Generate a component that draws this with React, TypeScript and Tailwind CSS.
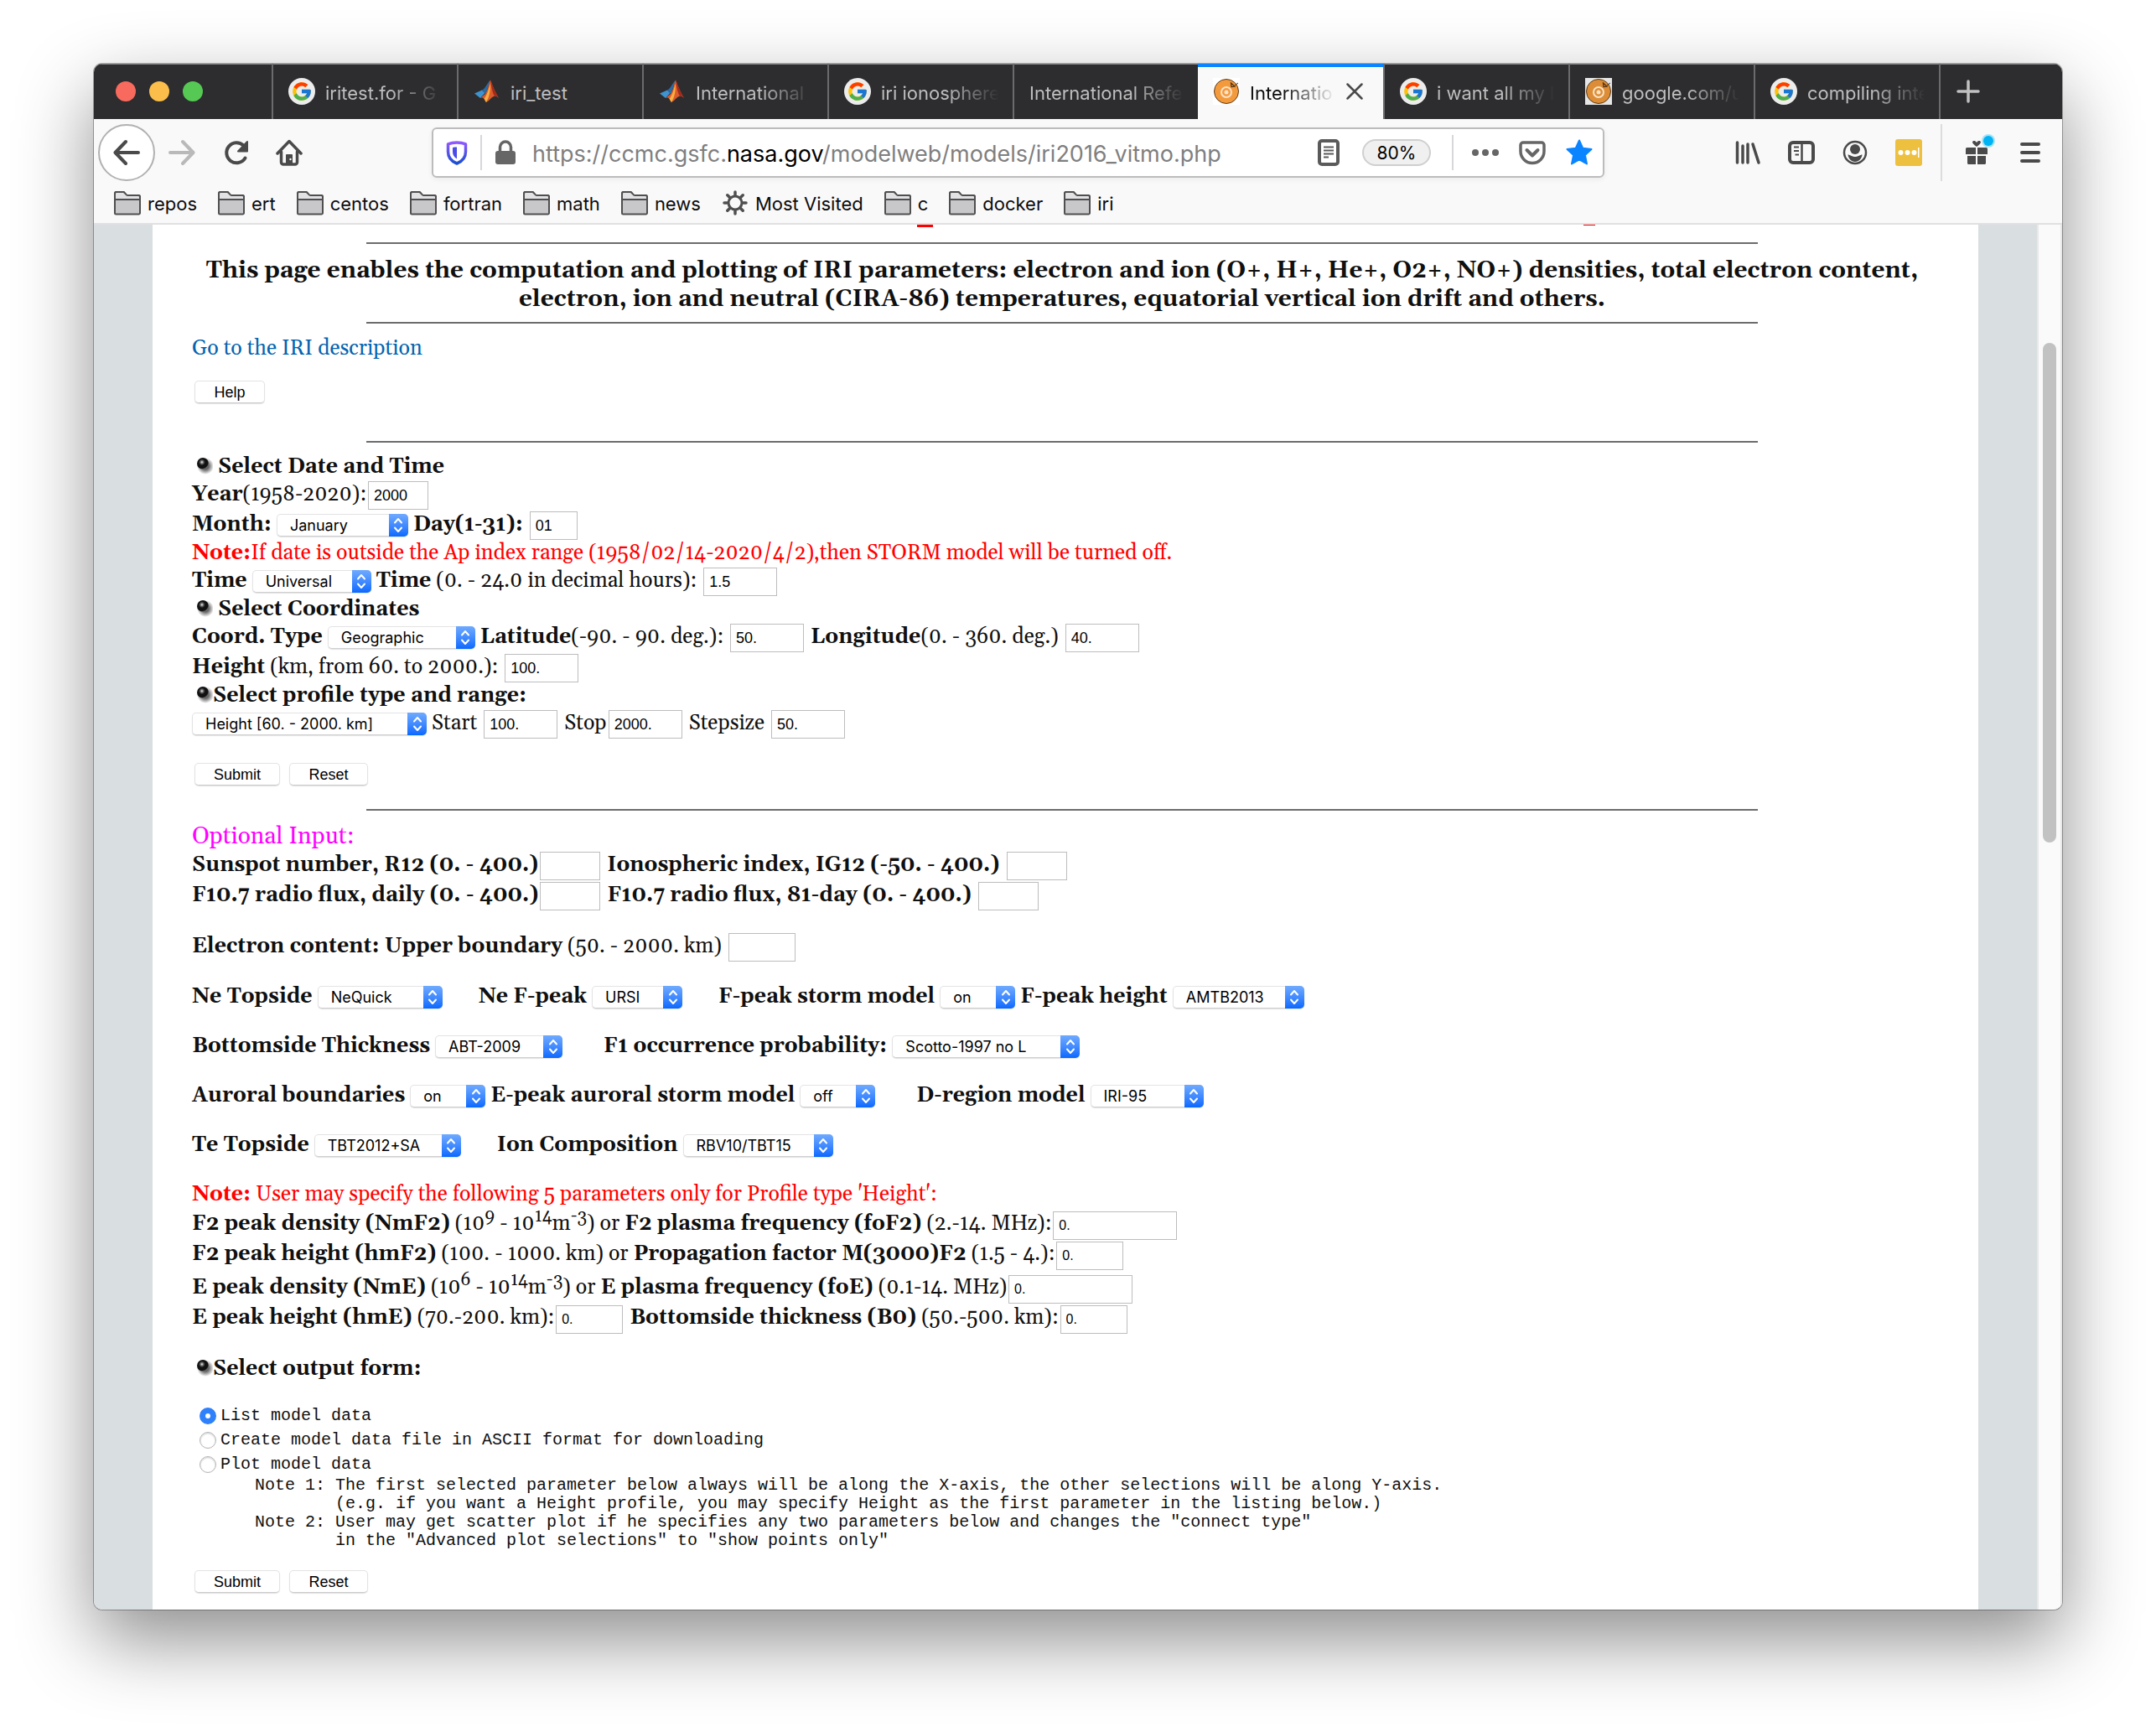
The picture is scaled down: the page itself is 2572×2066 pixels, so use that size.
import React, { useId } from "react";
import { FcGoogle } from "react-icons/fc";

function GoogleIcon() {
  return (
    <span className="flex size-8 shrink-0 items-center justify-center rounded-full bg-[#ececec]">
      <FcGoogle className="size-[26px]" aria-hidden="true" />
    </span>
  );
}

function MatlabIcon() {
  return (
    <svg className="size-8 shrink-0" viewBox="0 0 32 32" aria-hidden="true">
      <path d="M1 18.500l9-4 3.500 3.500L8 24z" fill="#3f93cf" />
      <path d="M10 14.500C14 13 16 6 20 2.500L14.500 19l-1-1z" fill="#2b6aa3" />
      <path d="M8 24l6-5c3-4 4-12 6-16.500 2 5 6 15 10 21.500-2-2-4-3-6-2-3 1-5.500 5.500-9 7-1-1-2-4-3.500-5-1-.6-2-.6-3.500 0z" fill="#dd5a2a" />
      <path d="M20 2.500c2 5 6 15 10 21.500-2-2-4-3-5-2.500C22 17 21 9 20 2.500z" fill="#a32a1c" />
      <path d="M15 29c-1-1-1.500-3-2.500-4.200C16 21 18.500 12 19.500 7c1 5 0 15-4.500 22z" fill="#f6b043" />
    </svg>
  );
}

function OrangeIcon({ dim }: { dim?: boolean }) {
  return (
    <svg className="size-8 shrink-0" viewBox="0 0 32 32" aria-hidden="true">
      <rect width="32" height="32" fill={dim ? "#e6e6e6" : "#ffffff"} />
      <circle cx="16" cy="16" r="14.500" fill={dim ? "#dd8d35" : "#f39a3c"} stroke="#5a3b1c" strokeWidth="1" />
      <circle cx="16" cy="17" r="6" fill="none" stroke="#fbe3c8" strokeWidth="2" />
      <circle cx="16" cy="17" r="2.500" fill="#fbe3c8" />
      <path d="M21.500 6l4.500 4-4 .5z" fill="none" stroke="#4b3118" strokeWidth="1.200" />
      <path d="M26 9l4-3" stroke="#4b3118" strokeWidth="1" />
    </svg>
  );
}

type TabData = { title: string; icon?: "google" | "matlab" | "orange"; active?: boolean };

const tabs: TabData[] = [
  { title: "iritest.for - G", icon: "google" },
  { title: "iri_test", icon: "matlab" },
  { title: "International", icon: "matlab" },
  { title: "iri ionosphere", icon: "google" },
  { title: "International Refe" },
  { title: "Internatio", icon: "orange", active: true },
  { title: "i want all my l", icon: "google" },
  { title: "google.com/u", icon: "orange" },
  { title: "compiling inte", icon: "google" },
];

function Tab({ title, icon, active }: TabData) {
  return (
    <div
      role="tab"
      aria-selected={!!active}
      className={
        "flex w-[221px] min-w-0 items-center gap-3 pl-[18px] text-[22px] " +
        (active
          ? "border-t-4 border-[#0a84ff] bg-[#f9f9fa] pr-6 pb-1 text-[#0c0c0d]"
          : "border-l-2 border-[#6b6b6d] pr-4 text-[#bebebf]")
      }
    >
      {icon === "google" && <GoogleIcon />}
      {icon === "matlab" && <MatlabIcon />}
      {icon === "orange" && <OrangeIcon dim={!active} />}
      <span
        className={
          "min-w-0 flex-1 whitespace-nowrap pt-1 " +
          (title === "iri_test" ? "" : "[mask-image:linear-gradient(to_right,black_calc(100%-64px),transparent)]")
        }
      >
        {title}
      </span>
      {active && (
        <button type="button" aria-label="Close tab" className="shrink-0">
          <svg className="size-5" viewBox="0 0 20 20" fill="none" stroke="#4a4a4b" strokeWidth="2.500" strokeLinecap="round">
            <path d="M1.500 1.500l17 17M18.500 1.500l-17 17" />
          </svg>
        </button>
      )}
    </div>
  );
}

function TabBar() {
  return (
    <div className="flex h-[66px] bg-[#2d2d2f] shadow-[inset_0_1px_0_#8a8a8c]">
      <div className="flex w-[212px] shrink-0 items-center gap-4 pl-[26px]">
        <span className="size-6 rounded-full bg-[#f96a5e]" />
        <span className="size-6 rounded-full bg-[#fbbe4b]" />
        <span className="size-6 rounded-full bg-[#56c954]" />
      </div>
      <div role="tablist" className="flex min-w-0">
        {tabs.map((t, i) => (
          <Tab key={i} {...t} />
        ))}
      </div>
      <button type="button" aria-label="New tab" className="flex items-center border-l-2 border-[#6b6b6d] px-[19px]">
        <svg className="size-7" viewBox="0 0 28 28" stroke="#c0c0c1" strokeWidth="3.500" strokeLinecap="round">
          <path d="M14 2v24M2 14h24" />
        </svg>
      </button>
    </div>
  );
}

function ToolButton({ label, children }: { label: string; children: React.ReactNode }) {
  return (
    <button type="button" aria-label={label} className="flex size-8 shrink-0 items-center justify-center">
      {children}
    </button>
  );
}

function NavBar() {
  return (
    <div className="flex h-20 items-center pl-[5px] pr-[22px]">
      <button type="button" aria-label="Back" className="flex size-[68px] items-center justify-center rounded-full border-2 border-[#b1b1b1] bg-white">
        <svg className="size-8" viewBox="0 0 32 32" fill="none" stroke="#4a4a4b" strokeWidth="4" strokeLinecap="round" strokeLinejoin="round">
          <path d="M30 16H3M15 3L2.500 16 15 29" />
        </svg>
      </button>
      <div className="ml-4 flex gap-8">
        <ToolButton label="Forward">
          <svg className="size-8" viewBox="0 0 32 32" fill="none" stroke="#b9b9ba" strokeWidth="4" strokeLinecap="round" strokeLinejoin="round">
            <path d="M2 16h27M17 3l12.500 13L17 29" />
          </svg>
        </ToolButton>
        <ToolButton label="Reload">
          <svg className="size-8" viewBox="0 0 32 32" fill="none" stroke="#4a4a4b" strokeWidth="4" strokeLinecap="round">
            <path d="M27.500 22.500a12 12 0 1 1-2-15" />
            <path d="M30 3v11.500H19z" fill="#4a4a4b" strokeWidth="2" strokeLinejoin="round" />
          </svg>
        </ToolButton>
        <ToolButton label="Home">
          <svg className="size-8" viewBox="0 0 32 32" fill="none" stroke="#4a4a4b" strokeWidth="3.500" strokeLinecap="round" strokeLinejoin="round">
            <path d="M2 17L16 2.500 30 17M6.500 15v12.500a2.500 2.500 0 0 0 2.500 2.500h14a2.500 2.500 0 0 0 2.500-2.500V15" />
            <path d="M12.500 29V18.500h7V29z" fill="#4a4a4b" strokeWidth="1" />
            <circle cx="17.500" cy="24" r="1.200" fill="#fff" stroke="none" />
          </svg>
        </ToolButton>
      </div>

      <div className="ml-[154px] flex h-[60px] min-w-0 max-w-[1399px] flex-1 items-center rounded-md border-2 border-[#bcbcbc] bg-white px-3 shadow-[0_2px_6px_rgba(0,0,0,0.06)]">
        <svg className="size-8 shrink-0" viewBox="0 0 32 32" aria-hidden="true">
          <defs>
            <linearGradient id="shieldFill" x1="0" y1="0" x2="0" y2="1">
              <stop offset="0" stopColor="#9059ff" />
              <stop offset="1" stopColor="#1c4fd0" />
            </linearGradient>
          </defs>
          <path d="M16 4c4 0 8 .8 10.500 1.800V15c0 7-4 11.500-10.500 14-6.500-2.500-10.500-7-10.500-14V5.800C8 4.800 12 4 16 4z" fill="none" stroke="url(#shieldFill)" strokeWidth="3.500" strokeLinejoin="round" />
          <path d="M16 9.500v14c-3.500-2-5-5-5-8.500v-5c1.500-.4 3.500-.5 5-.5z" fill="#4a4be8" />
        </svg>
        <span className="ml-[12px] h-[42px] w-0.5 shrink-0 bg-[#d7d7db]" />
        <svg className="ml-[12px] size-8 shrink-0" viewBox="0 0 32 32" aria-hidden="true">
          <path d="M9.500 15V9.500a6.500 6.500 0 0 1 13 0V15" fill="none" stroke="#666" strokeWidth="3.500" />
          <rect x="4" y="14" width="24" height="16" rx="3" fill="#666" />
        </svg>
        <div className="ml-4 min-w-0 flex-1 overflow-hidden whitespace-nowrap pt-1 text-[27px] text-[#7f7f80]">
          https://ccmc.gsfc.<span className="text-black">nasa.gov</span>/modelweb/models/iri2016_vitmo.php
        </div>
        <svg className="size-8 shrink-0" viewBox="0 0 32 32" fill="none" stroke="#5a5a5b" aria-hidden="true">
          <rect x="5" y="2" width="22" height="28" rx="3" strokeWidth="4" />
          <path d="M10 9.500h12M10 13.500h12M10 17.500h12M10 21.500h6" strokeWidth="2" />
        </svg>
        <span className="ml-6 flex h-8 w-[82px] shrink-0 items-center justify-center rounded-full border-2 border-[#cfcfd0] bg-[#f0f0f1] pt-0.5 text-[21px] text-black">
          80%
        </span>
        <span className="ml-[25px] h-[42px] w-0.5 shrink-0 bg-[#d7d7db]" />
        <div className="ml-[22px] flex shrink-0 gap-6">
          <ToolButton label="Page actions">
            <svg className="size-8" viewBox="0 0 32 32" fill="#666">
              <circle cx="4" cy="16" r="4" />
              <circle cx="16" cy="16" r="4" />
              <circle cx="28" cy="16" r="4" />
            </svg>
          </ToolButton>
          <ToolButton label="Save to Pocket">
            <svg className="size-8" viewBox="0 0 32 32" fill="none" stroke="#666" strokeWidth="4" strokeLinecap="round" strokeLinejoin="round">
              <path d="M5 4h22a3 3 0 0 1 3 3v7.500a14 14 0 0 1-28 0V7a3 3 0 0 1 3-3z" strokeWidth="3.500" />
              <path d="M9.500 13l6.500 6.500 6.500-6.500" />
            </svg>
          </ToolButton>
          <ToolButton label="Edit bookmark">
            <svg className="size-8" viewBox="0 0 32 32" fill="#0a84ff" stroke="#0a84ff" strokeWidth="2" strokeLinejoin="round">
              <path d="M16 1.500l4.300 9.300 10.200 1.200-7.600 6.900 2.100 10.600L16 24.500l-9 5 2.100-10.600L1.500 12l10.200-1.200z" />
            </svg>
          </ToolButton>
        </div>
      </div>

      <div className="ml-auto flex items-center">
        <div className="flex gap-8">
          <ToolButton label="Library">
            <svg className="size-8" viewBox="0 0 32 32" fill="none" stroke="#4a4a4b" strokeWidth="3.500" strokeLinecap="round">
              <path d="M3.500 4v24M10 8v20M16 6v22M22 6l7 22" />
            </svg>
          </ToolButton>
          <ToolButton label="Sidebars">
            <svg className="size-8" viewBox="0 0 32 32" fill="none" stroke="#4a4a4b">
              <rect x="2" y="4" width="28" height="24" rx="4" strokeWidth="4" />
              <path d="M16.500 5v22" strokeWidth="2.500" />
              <path d="M7 9.500h6M7 14h6M8.500 18.500H13" strokeWidth="2" />
            </svg>
          </ToolButton>
          <ToolButton label="Account">
            <svg className="size-8" viewBox="0 0 32 32">
              <circle cx="16" cy="16" r="13" fill="none" stroke="#4a4a4b" strokeWidth="2.500" />
              <circle cx="16" cy="12" r="6" fill="#4a4a4b" />
              <path d="M7.500 18.500c2.500 0 4.500 2.500 8.500 2.500s6-2.500 8.500-2.500c-.5 4.500-4 8.500-8.500 8.500s-8-4-8.500-8.500z" fill="#4a4a4b" />
            </svg>
          </ToolButton>
          <ToolButton label="Password manager">
            <svg className="size-8" viewBox="0 0 32 32">
              <rect width="32" height="32" rx="3" fill="#edc03f" />
              <g fill="#fff">
                <circle cx="6.500" cy="16" r="3" />
                <circle cx="14.500" cy="16" r="3" />
                <circle cx="22.500" cy="16" r="3" />
                <rect x="27" y="10" width="1.500" height="12" />
              </g>
            </svg>
          </ToolButton>
        </div>
        <span className="ml-[22px] h-[68px] w-0.5 bg-[#dcdcdd]" />
        <div className="ml-[25px] flex gap-8">
          <span className="relative flex">
            <ToolButton label="What's new">
              <svg className="size-8" viewBox="0 0 32 32" fill="#4a4a4b">
                <path d="M3 11.500A1.500 1.500 0 0 1 4.500 10H15v8H3zM17 10h10.500a1.500 1.500 0 0 1 1.500 1.500V18H17zM5 20h10v10H6.500A1.500 1.500 0 0 1 5 28.500zM17 20h10v8.500a1.500 1.500 0 0 1-1.500 1.500H17z" />
                <path d="M16 9c-3-2-5-4-5-5.500C11 1.500 14.500 1 16 4c1.500-3 5-2.500 5-.5C21 5 19 7 16 9z" />
              </svg>
            </ToolButton>
            <span className="absolute -right-1 -top-1 size-3 rounded-full bg-[#00b3f4] shadow-[0_0_0_2px_#a6e3f8]" />
          </span>
          <ToolButton label="Menu">
            <svg className="size-8" viewBox="0 0 32 32" stroke="#4a4a4b" strokeWidth="4" strokeLinecap="round">
              <path d="M6 6h20M6 16h20M6 26h20" />
            </svg>
          </ToolButton>
        </div>
      </div>
    </div>
  );
}

function FolderIcon() {
  return (
    <svg className="size-8" viewBox="0 0 32 32" stroke="#4f4f50" strokeWidth="2" strokeLinejoin="round" aria-hidden="true">
      <path d="M1 27V4a2 2 0 0 1 2-2h8c2 0 3 4 5 4h13a2 2 0 0 1 2 2v19a1.500 1.500 0 0 1-1.500 1.500h-27A1.500 1.500 0 0 1 1 27z" fill="#c8c8cb" />
      <path d="M1 11V4a2 2 0 0 1 2-2h8c2 0 3 4 5 4h13a2 2 0 0 1 2 2v3z" fill="#e2e2e4" />
    </svg>
  );
}

function GearIcon() {
  return (
    <svg className="size-8" viewBox="0 0 32 32" fill="none" stroke="#4f4f50" aria-hidden="true">
      <circle cx="16" cy="15" r="8" strokeWidth="3" />
      <path
        d="M16 2v4M16 24v4M3 15h4M25 15h4M6.800 5.800l3 3M22.200 21.200l3 3M6.800 24.200l3-3M22.200 8.800l3-3"
        strokeWidth="3.500"
        strokeLinecap="round"
      />
    </svg>
  );
}

const bookmarks = ["repos", "ert", "centos", "fortran", "math", "news", "Most Visited", "c", "docker", "iri"];

function BookmarkBar() {
  return (
    <div className="flex h-[46px] items-center gap-[25px] border-b-2 border-[#e0e0e1] pb-0.5 pl-6 text-[22px] text-[#0c0c0d]">
      {bookmarks.map((b) => (
        <a key={b} href="#" className="flex items-center gap-2 whitespace-nowrap">
          {b === "Most Visited" ? <GearIcon /> : <FolderIcon />}
          {b}
        </a>
      ))}
    </div>
  );
}

function Row({ children, className = "" }: { children: React.ReactNode; className?: string }) {
  return <div className={"leading-[31px] " + className}>{children}</div>;
}

function Field({
  label,
  value = "",
  width,
  tight,
  small,
}: {
  label: React.ReactNode;
  value?: string;
  width: string;
  tight?: boolean;
  small?: boolean;
}) {
  const id = useId();
  return (
    <>
      <label htmlFor={id}>{label}</label>
      {tight ? "" : " "}
      <input
        id={id}
        type="text"
        defaultValue={value}
        className={
          "mx-0.5 my-px inline-block h-[34px] border border-[#bdbdbd] bg-white px-1.5 font-['Liberation_Sans',Arial,sans-serif] leading-8 text-black " +
          (small ? "text-[16px] " : "text-[18px] ") +
          width
        }
      />
    </>
  );
}

function Choice({ label, value, width }: { label: React.ReactNode; value: string; width: string }) {
  const id = useId();
  return (
    <>
      {label !== null && (
        <>
          <label htmlFor={id}>{label}</label>{" "}
        </>
      )}
      <span className={"relative inline-block h-[27px] leading-[27px] " + width}>
        <select
          id={id}
          aria-label={label === null ? "Profile type" : undefined}
          className="h-[27px] w-full appearance-none rounded-[5px] border border-[#e3e3e3] border-b-[#cfcfcf] bg-white pl-[15px] font-[Inter,sans-serif] text-[18px] leading-[25px] text-black shadow-[0_1px_1px_rgba(0,0,0,0.12)]"
        >
          <option>{value}</option>
        </select>
        <span className="pointer-events-none absolute inset-y-0 right-0 flex w-[23px] items-center justify-center rounded-r-[5px] bg-gradient-to-b from-[#6faaff] to-[#0568ff]">
          <svg className="h-[19px] w-3" viewBox="0 0 12 19" fill="none" stroke="#fff" strokeWidth="2" strokeLinecap="round" strokeLinejoin="round" aria-hidden="true">
            <path d="M2 6.500L6 2l4 4.500M2 12.500L6 17l4-4.500" />
          </svg>
        </span>
      </span>
    </>
  );
}

function Bullet() {
  return (
    <svg className="-mb-0.5 inline-block h-[22px] w-[25px] align-baseline" viewBox="0 0 25 22" aria-hidden="true">
      <defs>
        <radialGradient id="ballShade" cx="0.5" cy="0.5" r="0.5">
          <stop offset="0.4" stopColor="#000" stopOpacity="0.6" />
          <stop offset="1" stopColor="#000" stopOpacity="0" />
        </radialGradient>
        <radialGradient id="ballFill" cx="0.42" cy="0.38" r="0.6">
          <stop offset="0" stopColor="#f2f2f2" />
          <stop offset="0.2" stopColor="#777" />
          <stop offset="0.45" stopColor="#111" />
          <stop offset="0.85" stopColor="#111" />
          <stop offset="1" stopColor="#666" />
        </radialGradient>
      </defs>
      <ellipse cx="16" cy="12" rx="10" ry="10" fill="url(#ballShade)" />
      <circle cx="13" cy="9" r="7" fill="url(#ballFill)" />
    </svg>
  );
}

function Divider({ className = "" }: { className?: string }) {
  return <hr className={"mx-auto w-4/5 border-t-2 border-[#6c6c6c] " + className} />;
}

function PushButton({ children, width, type = "button" }: { children: React.ReactNode; width: string; type?: "button" | "submit" | "reset" }) {
  return (
    <button
      type={type}
      className={
        "h-[27px] rounded-[5px] border border-[#e3e3e3] border-b-[#cbcbcb] bg-white font-['Liberation_Sans',Arial,sans-serif] text-[18px] leading-[22px] text-black shadow-[0_1px_1px_rgba(0,0,0,0.12)] " +
        width
      }
    >
      {children}
    </button>
  );
}

function SubmitRow({ className }: { className: string }) {
  return (
    <div className={"flex gap-[11px] pl-[3px] " + className}>
      <PushButton type="submit" width="w-[102px]">Submit</PushButton>
      <PushButton type="reset" width="w-[94px]">Reset</PushButton>
    </div>
  );
}

function RadioRow({ children, checked }: { children: React.ReactNode; checked?: boolean }) {
  return (
    <label className="flex h-[29px] items-center gap-[5px] pl-[9px]">
      <input
        type="radio"
        name="output"
        defaultChecked={checked}
        className="size-5 appearance-none rounded-full border border-[#b5b5b5] bg-white shadow-[inset_0_1px_2px_rgba(0,0,0,0.2)] checked:border-[7px] checked:border-[#2f80fb] checked:shadow-none"
      />
      <span className="whitespace-pre">{children}</span>
    </label>
  );
}

const plotNotes = [
  ["Note 1:", "The first selected parameter below always will be along the X-axis, the other selections will be along Y-axis."],
  ["", "(e.g. if you want a Height profile, you may specify Height as the first parameter in the listing below.)"],
  ["Note 2:", "User may get scatter plot if he specifies any two parameters below and changes the \"connect type\""],
  ["", "in the \"Advanced plot selections\" to \"show points only\""],
];

function ModelForm() {
  return (
    <form onSubmit={(e) => e.preventDefault()}>
      <Row className="mt-3.5"><Bullet /> <b>Select Date and Time</b></Row>
      <Row><Field tight label={<><b>Year</b>(1958-2020):</>} value="2000" width="w-[72px]" /></Row>
      <Row>
        <Choice label={<b>Month:</b>} value="January" width="w-[157px]" />{" "}
        <Field label={<b>Day(1-31):</b>} value="01" width="w-[57px]" />
      </Row>
      <Row className="text-[#ff0000]">
        <b>Note:</b>If date is outside the Ap index range (1958/02/14-2020/4/2),then STORM model will be turned off.
      </Row>
      <Row>
        <Choice label={<b>Time</b>} value="Universal" width="w-[142px]" />{" "}
        <Field label={<><b>Time</b> (0. - 24.0 in decimal hours):</>} value="1.5" width="w-[88px]" />
      </Row>
      <Row><Bullet /> <b>Select Coordinates</b></Row>
      <Row>
        <Choice label={<b>Coord. Type</b>} value="Geographic" width="w-[176px]" />{" "}
        <Field label={<><b>Latitude</b>(-90. - 90. deg.):</>} value="50." width="w-[88px]" />{" "}
        <Field label={<><b>Longitude</b>(0. - 360. deg.)</>} value="40." width="w-[88px]" />
      </Row>
      <Row><Field label={<><b>Height</b> (km, from 60. to 2000.):</>} value="100." width="w-[88px]" /></Row>
      <Row><Bullet /><b>Select profile type and range:</b></Row>
      <Row>
        <Choice label={null} value="Height [60. - 2000. km]" width="w-[280px]" />{" "}
        <Field label="Start" value="100." width="w-[88px]" />{" "}
        <Field tight label="Stop" value="2000." width="w-[88px]" />{" "}
        <Field label="Stepsize" value="50." width="w-[88px]" />
      </Row>
      <SubmitRow className="mt-7" />

      <Divider className="mt-7" />
      <h2 className="mt-3.5 text-[28px] leading-[34px] text-[#ff00ff]">Optional Input:</h2>
      <Row>
        <Field tight label={<b>Sunspot number, R12 (0. - 400.)</b>} width="w-[72px]" />{" "}
        <Field label={<b>Ionospheric index, IG12 (-50. - 400.)</b>} width="w-[72px]" />
      </Row>
      <Row>
        <Field tight label={<b>F10.7 radio flux, daily (0. - 400.)</b>} width="w-[72px]" />{" "}
        <Field label={<b>F10.7 radio flux, 81-day (0. - 400.)</b>} width="w-[72px]" />
      </Row>
      <Row className="mt-[25px]">
        <Field label={<><b>Electron content: Upper boundary</b> (50. - 2000. km)</>} width="w-[80px]" />
      </Row>
      <Row className="mt-[26px]">
        <Choice label={<b>Ne Topside</b>} value="NeQuick" width="w-[149px]" />{" "}
        <span className="ml-[37px]"><Choice label={<b>Ne F-peak</b>} value="URSI" width="w-[108px]" /></span>{" "}
        <span className="ml-[37px]"><Choice label={<b>F-peak storm model</b>} value="on" width="w-[90px]" /></span>{" "}
        <Choice label={<b>F-peak height</b>} value="AMTB2013" width="w-[157px]" />
      </Row>
      <Row className="mt-7">
        <Choice label={<b>Bottomside Thickness</b>} value="ABT-2009" width="w-[152px]" />{" "}
        <span className="ml-[43px]"><Choice label={<b>F1 occurrence probability:</b>} value="Scotto-1997 no L" width="w-[224px]" /></span>
      </Row>
      <Row className="mt-7">
        <Choice label={<b>Auroral boundaries</b>} value="on" width="w-[90px]" />{" "}
        <Choice label={<b>E-peak auroral storm model</b>} value="off" width="w-[90px]" />{" "}
        <span className="ml-[43px]"><Choice label={<b>D-region model</b>} value="IRI-95" width="w-[135px]" /></span>
      </Row>
      <Row className="mt-7">
        <Choice label={<b>Te Topside</b>} value="TBT2012+SA" width="w-[175px]" />{" "}
        <span className="ml-[37px]"><Choice label={<b>Ion Composition</b>} value="RBV10/TBT15" width="w-[179px]" /></span>
      </Row>
      <Row className="mt-7 text-[#ff0000]">
        <b>Note:</b> User may specify the following 5 parameters only for Profile type 'Height':
      </Row>
      <Row className="mt-[3px]">
        <Field
          tight
          small
          label={<><b>F2 peak density (NmF2)</b> (10<sup>9</sup> - 10<sup>14</sup>m<sup>-3</sup>) or <b>F2 plasma frequency (foF2)</b> (2.-14. MHz):</>}
          value="0."
          width="w-[148px]"
        />
      </Row>
      <Row>
        <Field
          tight
          small
          label={<><b>F2 peak height (hmF2)</b> (100. - 1000. km) or <b>Propagation factor M(3000)F2</b> (1.5 - 4.):</>}
          value="0."
          width="w-[80px]"
        />
      </Row>
      <Row className="mt-1">
        <Field
          tight
          small
          label={<><b>E peak density (NmE)</b> (10<sup>6</sup> - 10<sup>14</sup>m<sup>-3</sup>) or <b>E plasma frequency (foE)</b> (0.1-14. MHz)</>}
          value="0."
          width="w-[148px]"
        />
      </Row>
      <Row>
        <Field tight small label={<><b>E peak height (hmE)</b> (70.-200. km):</>} value="0." width="w-[80px]" />{" "}
        <Field tight small label={<><b>Bottomside thickness (B0)</b> (50.-500. km):</>} value="0." width="w-[80px]" />
      </Row>
      <Row className="mt-[26px]"><Bullet /><b>Select output form:</b></Row>

      <div className="mt-[25px] font-['Liberation_Mono','Courier_New',monospace] text-[20px] leading-[22px]">
        <RadioRow checked>List model data</RadioRow>
        <RadioRow>Create model data file in ASCII format for downloading</RadioRow>
        <RadioRow>Plot model data</RadioRow>
        <dl className="grid grid-cols-[auto_1fr] gap-x-3 pl-[75px]">
          {plotNotes.map(([term, text]) => (
            <React.Fragment key={text}>
              <dt>{term}</dt>
              <dd>{text}</dd>
            </React.Fragment>
          ))}
        </dl>
      </div>
      <SubmitRow className="mt-6" />
    </form>
  );
}

export default function App() {
  return (
    <div className="min-h-screen bg-white px-28 pb-[148px] pt-[76px] font-[Inter,sans-serif]">
      <div className="overflow-hidden rounded-[10px] bg-[#f9f9fa] shadow-[0_0_0_1px_rgba(0,0,0,0.3),0_36px_90px_rgba(0,0,0,0.45)]">
        <TabBar />
        <NavBar />
        <BookmarkBar />
        <div className="flex">
          <div className="min-w-0 flex-1 bg-[#d9dee1] px-[70px]">
            <main className="bg-white pb-5 pl-[47px] pr-[55px] font-['Gelasio','Liberation_Serif',serif] text-[25px] oldstyle-nums text-[#101010] [&_sup]:text-[21px]">
              <div className="flex h-[21px] items-start justify-between pl-[865px] pr-[402px]" aria-hidden="true">
                <span className="h-[3px] w-[19px] bg-[#ff0000]" />
                <span className="h-px w-3.5 bg-[#ff0000]" />
              </div>
              <Divider />
              <h1 className="mt-[15px] text-center text-[28px] font-bold leading-[34px]">
                This page enables the computation and plotting of IRI parameters: electron and ion (O+, H+, He+, O2+, NO+) densities, total electron content, electron, ion and neutral (CIRA-86) temperatures, equatorial vertical ion drift and others.
              </h1>
              <Divider className="mt-2.5" />
              <Row className="mt-[15px]"><a href="#" className="text-[#0464b0]">Go to the IRI description</a></Row>
              <div className="mb-[45px] mt-[22px] flex pl-[3px]"><PushButton width="w-[84px]">Help</PushButton></div>
              <Divider />
              <ModelForm />
            </main>
          </div>
          <div className="w-[30px] shrink-0 border-l-2 border-r-2 border-[#e8e8e8] bg-[#fafafa] px-[5px] pt-[141px]">
            <div className="h-[596px] rounded-full bg-[#c2c2c2]" />
          </div>
        </div>
      </div>
    </div>
  );
}
